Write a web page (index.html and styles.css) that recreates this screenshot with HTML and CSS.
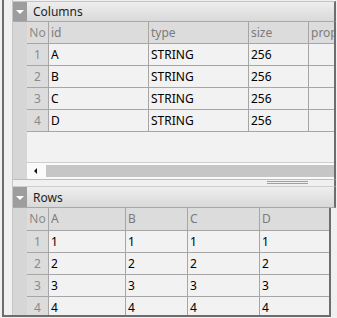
FILE: index.html
```html
<!DOCTYPE html>
<html>
<head>
    <meta charset="utf-8">
    <title>Columns / Rows</title>
    <link rel="stylesheet" href="styles.css">
</head>
<body>
<div class="frame">
    <div class="stack">
        <div class="panel-head wide">
            <span class="toggle"></span>
            <span class="title">Columns</span>
        </div>
        <div class="panel-body wide">
            <div class="stripe"></div>
            <div class="content">
                <div class="grid grid-cols">
                    <div class="hd num">No</div><div class="hd">id</div><div class="hd">type</div><div class="hd">size</div><div class="hd">prop</div>
                    <div class="num">1</div><div class="c">A</div><div class="c">STRING</div><div class="c">256</div><div class="c"></div>
                    <div class="num">2</div><div class="c">B</div><div class="c">STRING</div><div class="c">256</div><div class="c"></div>
                    <div class="num">3</div><div class="c">C</div><div class="c">STRING</div><div class="c">256</div><div class="c"></div>
                    <div class="num">4</div><div class="c">D</div><div class="c">STRING</div><div class="c">256</div><div class="c"></div>
                </div>
                <div class="empty"></div>
                <div class="hscroll">
                    <span class="arrow"></span>
                    <span class="track"></span>
                </div>
            </div>
        </div>
        <div class="splitter wide"><span class="grip"></span></div>
        <div class="panel-head second wide">
            <span class="toggle"></span>
            <span class="title">Rows</span>
        </div>
        <div class="panel-body narrow">
            <div class="stripe"></div>
            <div class="content">
                <div class="grid grid-rows">
                    <div class="hd num">No</div><div class="hd">A</div><div class="hd">B</div><div class="hd">C</div><div class="hd">D</div>
                    <div class="num">1</div><div class="c">1</div><div class="c">1</div><div class="c">1</div><div class="c">1</div>
                    <div class="num">2</div><div class="c">2</div><div class="c">2</div><div class="c">2</div><div class="c">2</div>
                    <div class="num">3</div><div class="c">3</div><div class="c">3</div><div class="c">3</div><div class="c">3</div>
                    <div class="num">4</div><div class="c">4</div><div class="c">4</div><div class="c">4</div><div class="c">4</div>
                </div>
            </div>
        </div>
    </div>
</div>
</body>
</html>
```

FILE: styles.css
```css
html, body {
    margin: 0;
    height: 100%;
}

body {
    overflow: hidden;
    background: #f0f0f0;
    font-family: "Noto Sans", "Open Sans", sans-serif;
    font-size: 12px;
    color: #000;
}

.frame {
    margin-left: 2px;
    width: 319px;
    height: 315px;
    padding-left: 8px;
    border-left: 2px solid #6d6d6d;
    border-bottom: 2px solid #6d6d6d;
}

.stack {
    height: 100%;
    padding-top: 1px;
    box-sizing: border-box;
    border-left: 1px solid #c6c6c6;
    display: flex;
    flex-direction: column;
}

.wide {
    width: 321px;
    border-right: 2px solid #6d6d6d;
    flex: none;
}

.narrow {
    width: 316px;
    border-right: 2px solid #6d6d6d;
    flex: 1;
    min-height: 0;
    overflow: hidden;
}

.panel-head {
    display: flex;
    height: 19px;
    border-top: 1px solid #c4c4c4;
    border-bottom: 1px solid #a8a8a8;
    background: linear-gradient(#eeeeee, #d9d9d9);
}

.panel-head.second {
    height: 20px;
    border-top: 0;
}

.toggle {
    width: 14px;
    background: #9d9d9d;
    position: relative;
}

.toggle::after {
    content: "";
    position: absolute;
    left: 3px;
    top: 8px;
    border-left: 4px solid transparent;
    border-right: 4px solid transparent;
    border-top: 4px solid #fff;
}

.panel-head.second .toggle::after {
    top: 9px;
}

.title {
    padding-left: 6px;
    line-height: 19px;
    color: #1e1e1e;
}

.panel-head.second .title {
    line-height: 21px;
}

.panel-body {
    display: flex;
}

.stripe {
    width: 14px;
    flex: none;
    background: #d6d6d6;
}

.content {
    flex: 1;
    min-width: 0;
    overflow: hidden;
    display: flex;
    flex-direction: column;
    background: #f2f2f2;
}

.grid {
    display: grid;
    gap: 1px;
    background: #a6a6a6;
    grid-auto-rows: 21px;
}

.grid-cols {
    grid-template-columns: 21px 99px 99px 59px 1fr;
    border-bottom: 1px solid #a6a6a6;
}

.grid-rows {
    grid-template-columns: 21px 76px 61px 71px 1fr;
    grid-template-rows: 22px;
}

.grid > div {
    padding: 0 2px;
    line-height: 21px;
    white-space: nowrap;
    overflow: hidden;
    background: #f2f2f2;
}

.grid-rows > .hd {
    line-height: 22px;
}

.grid > .hd {
    background: #dcdcdc;
    color: #7b7b7b;
}

.grid > .num {
    padding: 0;
    text-align: center;
    background: #dcdcdc;
    color: #8a8a8a;
}

.empty {
    height: 30px;
}

.hscroll {
    height: 16px;
    display: flex;
    border-top: 1px solid #cdcdcd;
    background: #fafafa;
}

.arrow {
    width: 19px;
    position: relative;
}

.arrow::after {
    content: "";
    position: absolute;
    left: 7px;
    top: 5px;
    border-top: 3px solid transparent;
    border-bottom: 3px solid transparent;
    border-right: 3px solid #111;
}

.track {
    flex: 1;
    margin: 2px 0;
    background: #c6c6c6;
}

.splitter {
    height: 6px;
    border-top: 1px solid #bcbcbc;
    border-bottom: 1px solid #cdcdcd;
    background: #f0f0f0;
}

.grip {
    display: block;
    width: 41px;
    height: 1px;
    margin: 1px 0 0 254px;
    border-top: 1px solid #a0a0a0;
    border-bottom: 1px solid #a0a0a0;
}
```
